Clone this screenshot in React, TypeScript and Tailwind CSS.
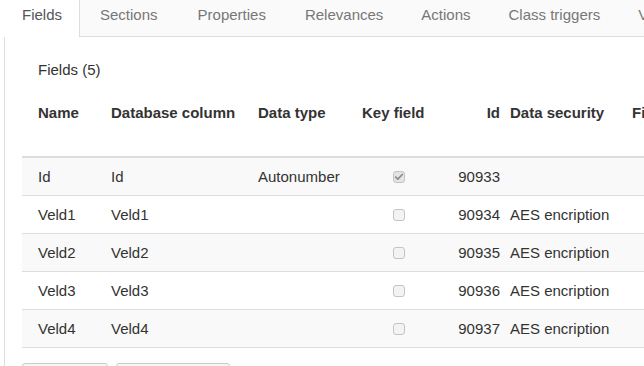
import { Check } from "lucide-react";

const tabs = ["Sections", "Properties", "Relevances", "Actions", "Class triggers", "Views"];

const rows = [
  { name: "Id", column: "Id", type: "Autonumber", key: true, id: "90933", security: "" },
  { name: "Veld1", column: "Veld1", type: "", key: false, id: "90934", security: "AES encription" },
  { name: "Veld2", column: "Veld2", type: "", key: false, id: "90935", security: "AES encription" },
  { name: "Veld3", column: "Veld3", type: "", key: false, id: "90936", security: "AES encription" },
  { name: "Veld4", column: "Veld4", type: "", key: false, id: "90937", security: "AES encription" },
];

function Box({ checked }: { checked: boolean }) {
  return (
    <div
      className={`flex h-[12px] w-[12px] items-center justify-center rounded-[3px] border border-[#c4c4c4] ${
        checked ? "bg-[#e4e4e4]" : "bg-[#f3f3f3]"
      }`}
    >
      {checked ? <Check className="h-[10px] w-[10px] text-[#8a8a8a]" strokeWidth={4} /> : null}
    </div>
  );
}

export default function App() {
  return (
    <div
      className="relative h-[366px] w-[644px] overflow-hidden bg-white text-[15px] leading-[20px] text-[#333]"
      style={{ fontFamily: '"Liberation Sans", Arial, sans-serif' }}
    >
      <div className="flex h-[37px] border-b border-[#ddd] bg-[#fafafa] whitespace-nowrap">
        <div className="-mb-px h-[37px] shrink-0 border-r border-[#ddd] bg-white pl-[22px] pr-[17px] pt-[5px] text-[#555]">
          Fields
        </div>
        {tabs.map((t, i) => (
          <div
            key={t}
            className={`shrink-0 pt-[5px] text-[#777] ${i < 2 ? "px-[20px]" : "px-[19px]"}`}
          >
            {t}
          </div>
        ))}
      </div>

      <div className="ml-[4px] h-[329px] border-l border-[#ddd] pl-[17px]">
        <div className="pl-[16px] pt-[23px] text-[#333]">Fields (5)</div>

        <div className="mt-[10px] w-[700px]">
          <div className="flex h-[68px] border-b-2 border-[#ddd] pt-[13px] font-bold whitespace-nowrap">
            <div className="w-[81px] shrink-0 pl-[16px]">Name</div>
            <div className="w-[147px] shrink-0 pl-[8px]">Database column</div>
            <div className="w-[104px] shrink-0 pl-[8px]">Data type</div>
            <div className="w-[86px] shrink-0 pl-[8px]">Key field</div>
            <div className="w-[62px] shrink-0 pr-[2px] text-right">Id</div>
            <div className="w-[122px] shrink-0 pl-[8px]">Data security</div>
            <div className="shrink-0 pl-[8px]">Field group</div>
          </div>

          {rows.map((r, i) => (
            <div
              key={r.name}
              className={`flex h-[38px] items-center border-b border-[#ddd] whitespace-nowrap ${
                i % 2 === 0 ? "bg-[#f9f9f9]" : "bg-white"
              }`}
            >
              <div className="w-[81px] shrink-0 pl-[16px]">{r.name}</div>
              <div className="w-[147px] shrink-0 pl-[8px]">{r.column}</div>
              <div className="w-[104px] shrink-0 pl-[8px]">{r.type}</div>
              <div className="w-[86px] shrink-0 pl-[39px]">
                <Box checked={r.key} />
              </div>
              <div className="w-[62px] shrink-0 pr-[2px] text-right">{r.id}</div>
              <div className="w-[122px] shrink-0 pl-[8px]">{r.security}</div>
              <div className="shrink-0 pl-[8px]"></div>
            </div>
          ))}

          <div className="mt-[15px] flex gap-[8px]">
            <div className="h-[32px] w-[86px] rounded-[3px] border border-[#ccc] bg-[#f5f5f5]" />
            <div className="h-[32px] w-[114px] rounded-[3px] border border-[#ccc] bg-[#f5f5f5]" />
          </div>
        </div>
      </div>
    </div>
  );
}
